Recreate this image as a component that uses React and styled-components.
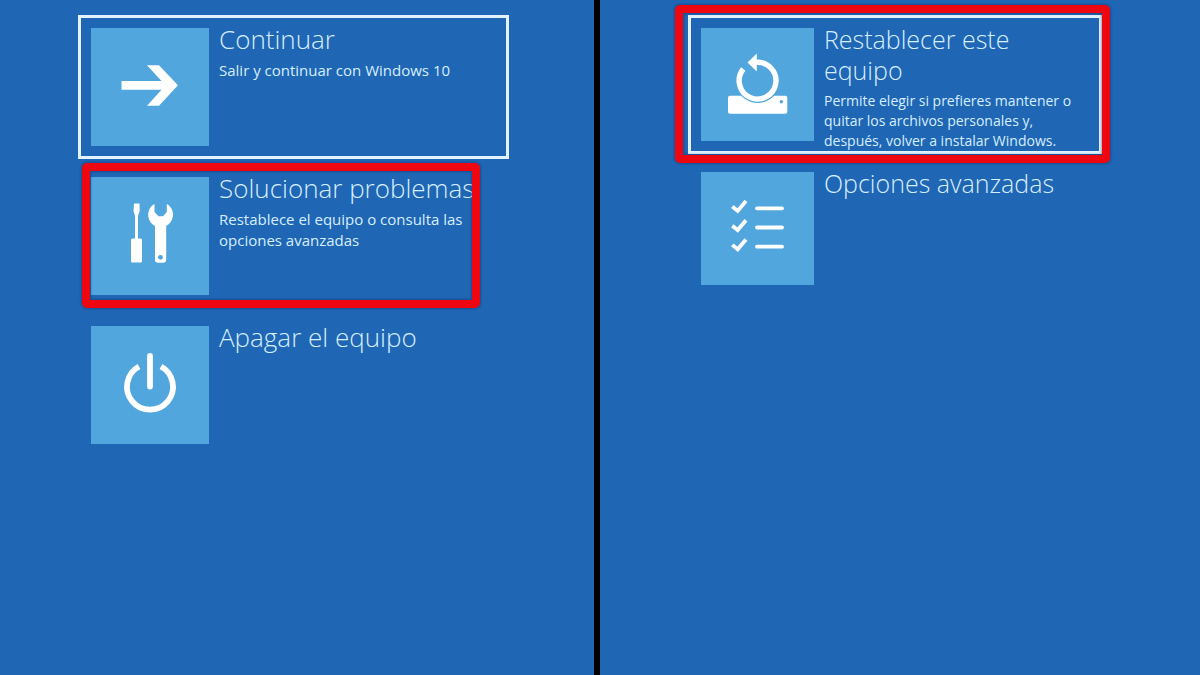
import React from 'react';
import styled, { createGlobalStyle } from 'styled-components';

const GlobalStyle = createGlobalStyle`
  body {
    margin: 0;
    background: #1f66b4;
    font-family: 'Open Sans', 'Noto Sans', sans-serif;
  }
  * {
    box-sizing: border-box;
  }
`;
const Page = styled.main`
  display: grid;
  grid-template-columns: 99fr 100fr;
  column-gap: 6px;
  min-height: 100vh;
  background: #000000;
`;
const Panel = styled.section`
  display: flex;
  flex-direction: column;
  gap: 5px;
  padding: 15px 20px 15px ${({ $indent }) => $indent}px;
  background: #1f66b4;
`;
const Option = styled.button`
  position: relative;
  display: flex;
  align-items: flex-start;
  width: 100%;
  max-width: ${({ $width }) => $width}px;
  padding: 0;
  border: 3px solid ${({ $selected }) => ($selected ? '#e2f3ff' : 'transparent')};
  background: none;
  color: #d6eeff;
  font-family: inherit;
  text-align: left;
  cursor: pointer;
`;
const Tile = styled.span`
  flex: none;
  width: ${({ $size }) => $size}px;
  height: ${({ $size }) => $size}px;
  margin: 10px;
  background: #50a6dd;
  svg {
    display: block;
  }
`;
const Text = styled.span`
  display: flex;
  flex-direction: column;
  gap: 5px;
  padding: 6px 20px 0 0;
`;
const Title = styled.span`
  font-size: ${({ $small }) => ($small ? 25 : 26)}px;
  line-height: 31px;
  font-weight: 300;
`;
const Description = styled.span`
  font-size: ${({ $small }) => ($small ? 14 : 15)}px;
  line-height: ${({ $small }) => ($small ? 20 : 21)}px;
`;
const Highlight = styled.span`
  position: absolute;
  inset: ${({ $inset }) => $inset};
  border: 8px solid #ee0610;
  border-radius: 5px;
  box-shadow: 0 0 3px rgba(20, 30, 80, 0.7), inset 0 0 3px rgba(20, 30, 80, 0.7);
  pointer-events: none;
`;

const ArrowIcon = () => (
  <svg viewBox="0 0 118 118" fill="#ffffff" aria-hidden="true">
    <path d="M30.5 53H70.5L56 37.3H68L87 57.3L68 77.7H56L70.5 61.7H30.5Z" />
  </svg>
);

const ToolsIcon = () => (
  <svg viewBox="0 0 118 118" fill="#ffffff" aria-hidden="true">
    <path d="M43 26.5H48.5L48.7 34L47 39V61.5H49.5Q51 61.5 51 63V84Q51 85.5 49.5 85.5H41.5Q40 85.5 40 84V63Q40 61.5 41.5 61.5H44V39L42.5 34Z" />
    <path d="M63.5 27V35L67.5 39.3H72L75.8 35V27C79.5 29 82 33 82 37.5C82 42.5 79.3 46.8 75.2 49V82.5Q75.2 85.7 72 85.7H67.2Q64 85.7 64 82.5V49C59.8 46.8 57.2 42.5 57.2 37.5C57.2 33 59.8 29 63.5 27Z" />
    <circle cx="69.5" cy="80.3" r="2.4" fill="#50a6dd" />
  </svg>
);

const PowerIcon = () => (
  <svg
    viewBox="0 0 118 118"
    fill="none"
    stroke="#ffffff"
    strokeWidth="5.8"
    aria-hidden="true"
  >
    <path d="M48 40.5A23 23 0 1 0 70 40.5" />
    <path d="M59 30V60.5" strokeLinecap="round" />
  </svg>
);

const ResetIcon = () => (
  <svg viewBox="0 0 113 113" fill="#ffffff" aria-hidden="true">
    <rect x="27" y="67.7" width="59.3" height="18" rx="2" />
    <circle cx="80.3" cy="73.7" r="1.7" fill="#50a6dd" />
    <circle cx="56.7" cy="52.7" r="22.2" fill="#50a6dd" />
    <path
      d="M42.3 41A18.4 18.4 0 1 0 55 34.3"
      fill="none"
      stroke="#ffffff"
      strokeWidth="5.4"
    />
    <path d="M46.5 34.6L55.8 25.5V43.5Z" />
  </svg>
);

const ChecklistIcon = () => (
  <svg
    viewBox="0 0 113 113"
    fill="none"
    stroke="#ffffff"
    strokeWidth="3.8"
    aria-hidden="true"
  >
    {[36.3, 55.5, 74.7].map((y) => (
      <React.Fragment key={y}>
        <path d={`M31.3 ${y - 1.8}L36.7 ${y + 2.6}L45 ${y - 7.2}`} />
        <path d={`M56 ${y}H81`} strokeLinecap="round" />
      </React.Fragment>
    ))}
  </svg>
);

const troubleshooting = [
  {
    title: 'Continuar',
    description: 'Salir y continuar con Windows 10',
    Icon: ArrowIcon,
    selected: true,
  },
  {
    title: 'Solucionar problemas',
    description: 'Restablece el equipo o consulta las opciones avanzadas',
    Icon: ToolsIcon,
    highlight: '-4px 26px -3px 1px',
  },
  { title: 'Apagar el equipo', Icon: PowerIcon },
];

const recovery = [
  {
    title: 'Restablecer este equipo',
    description:
      'Permite elegir si prefieres mantener o quitar los archivos personales y, después, volver a instalar Windows.',
    Icon: ResetIcon,
    selected: true,
    highlight: '-13px -11px -12px -16px',
  },
  { title: 'Opciones avanzadas', Icon: ChecklistIcon },
];

function OptionList({ items, width, tileSize, small }) {
  return items.map(({ title, description, Icon, selected, highlight }) => (
    <Option key={title} type="button" $width={width} $selected={selected}>
      <Tile $size={tileSize}>
        <Icon />
      </Tile>
      <Text>
        <Title $small={small}>{title}</Title>
        {description && <Description $small={small}>{description}</Description>}
      </Text>
      {highlight && <Highlight $inset={highlight} />}
    </Option>
  ));
}

export default function App() {
  return (
    <Page>
      <GlobalStyle />
      <Panel $indent={78}>
        <OptionList items={troubleshooting} width={431} tileSize={118} />
      </Panel>
      <Panel $indent={88}>
        <OptionList items={recovery} width={414} tileSize={113} small />
      </Panel>
    </Page>
  );
}
